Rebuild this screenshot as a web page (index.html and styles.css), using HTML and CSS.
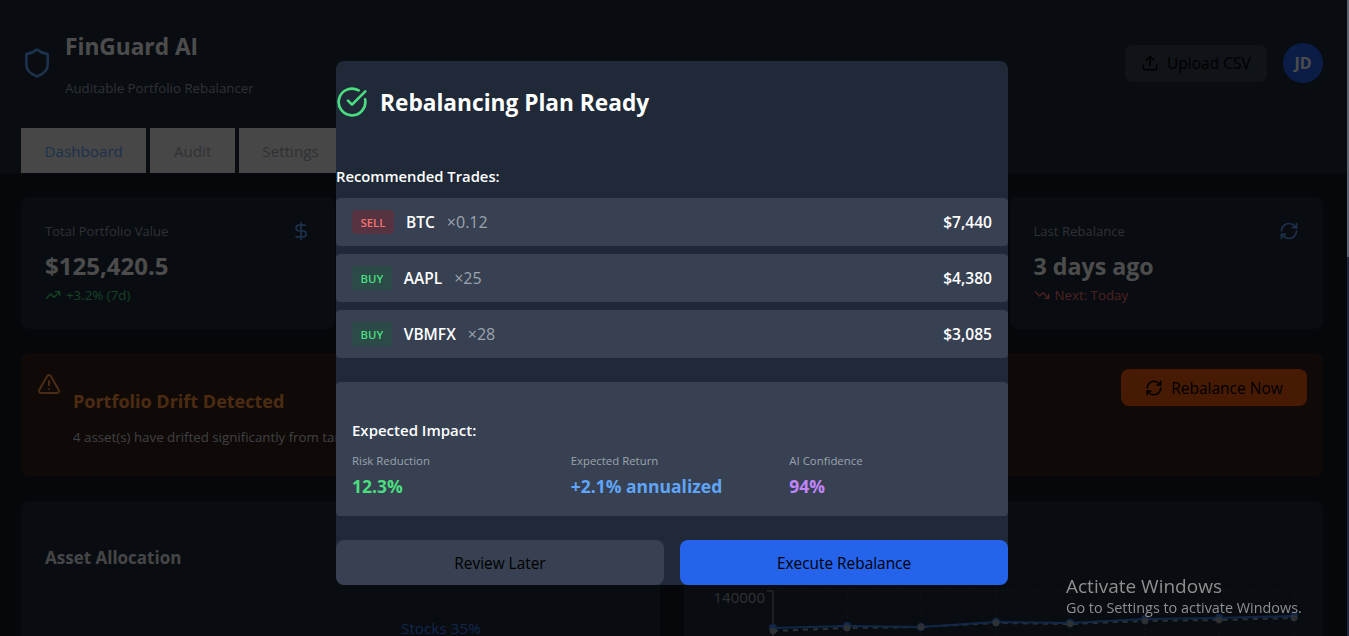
FILE: index.html
```html
<!DOCTYPE html>
<html lang="en">
<head>
  <meta charset="UTF-8">
  <title>FinGuard AI</title>
  <link rel="stylesheet" href="styles.css">
</head>
<body>
  <div class="page">
    <header class="header">
      <div class="header-top">
        <div class="brand">
          <svg class="brand-icon" viewBox="0 0 24 24"><path d="M20 13c0 5-3.500 7.500-7.660 8.950a1 1 0 0 1-.67-.01C7.500 20.500 4 18 4 13V6a1 1 0 0 1 1-1c2 0 4.500-1.200 6.240-2.720a1.170 1.170 0 0 1 1.520 0C14.510 3.810 17 5 19 5a1 1 0 0 1 1 1z"/></svg>
          <div>
            <h1>FinGuard AI</h1>
            <p>Auditable Portfolio Rebalancer</p>
          </div>
        </div>
        <div class="header-actions">
          <button class="upload-btn">
            <svg viewBox="0 0 24 24"><path d="M21 15v4a2 2 0 0 1-2 2H5a2 2 0 0 1-2-2v-4"/><path d="M17 8l-5-5-5 5"/><path d="M12 3v12"/></svg>
            Upload CSV
          </button>
          <div class="avatar">JD</div>
        </div>
      </div>
      <nav class="tabs">
        <button class="tab active">Dashboard</button>
        <button class="tab">Audit</button>
        <button class="tab">Settings</button>
      </nav>
    </header>

    <main class="main">
      <section class="stats">
        <div class="stat">
          <div class="stat-head">
            <span>Total Portfolio Value</span>
            <svg viewBox="0 0 24 24"><path d="M12 2v20"/><path d="M17 5H9.500a3.500 3.500 0 0 0 0 7h5a3.500 3.500 0 0 1 0 7H6"/></svg>
          </div>
          <div class="stat-value">$125,420.5</div>
          <div class="stat-note up">
            <svg viewBox="0 0 24 24"><path d="M22 7l-8.500 8.500-5-5L2 17"/><path d="M16 7h6v6"/></svg>
            +3.2% (7d)
          </div>
        </div>
        <div class="stat"></div>
        <div class="stat"></div>
        <div class="stat">
          <div class="stat-head">
            <span>Last Rebalance</span>
            <svg viewBox="0 0 24 24"><path d="M3 12a9 9 0 0 1 9-9 9.750 9.750 0 0 1 6.740 2.740L21 8"/><path d="M21 3v5h-5"/><path d="M21 12a9 9 0 0 1-9 9 9.750 9.750 0 0 1-6.740-2.740L3 16"/><path d="M8 16H3v5"/></svg>
          </div>
          <div class="stat-value wordy">3 days ago</div>
          <div class="stat-note down">
            <svg viewBox="0 0 24 24"><path d="M22 17l-8.500-8.500-5 5L2 7"/><path d="M16 17h6v-6"/></svg>
            Next: Today
          </div>
        </div>
      </section>

      <section class="alert">
        <svg class="alert-icon" viewBox="0 0 24 24"><path d="M21.730 18l-8-14a2 2 0 0 0-3.480 0l-8 14A2 2 0 0 0 4 21h16a2 2 0 0 0 1.730-3"/><path d="M12 9v4"/><path d="M12 17h.01"/></svg>
        <div class="alert-body">
          <h3>Portfolio Drift Detected</h3>
          <p>4 asset(s) have drifted significantly from target allocation</p>
        </div>
        <button class="alert-btn">
          <svg viewBox="0 0 24 24"><path d="M3 12a9 9 0 0 1 9-9 9.750 9.750 0 0 1 6.740 2.740L21 8"/><path d="M21 3v5h-5"/><path d="M21 12a9 9 0 0 1-9 9 9.750 9.750 0 0 1-6.740-2.740L3 16"/><path d="M8 16H3v5"/></svg>
          Rebalance Now
        </button>
      </section>

      <section class="charts">
        <div class="chart-card">
          <h3>Asset Allocation</h3>
          <div class="pie-label">Stocks 35%</div>
        </div>
        <div class="chart-card">
          <svg class="line-chart" viewBox="0 0 639 52">
            <g class="grid">
              <path d="M89 7H611"/>
              <path d="M89 7V52M163 7V52M237 7V52M312 7V52M386 7V52M461 7V52M535 7V52M610 7V52"/>
            </g>
            <path class="axis" d="M83 7H89V52"/>
            <text class="tick" x="81" y="19">140000</text>
            <polyline class="line-target" points="89,47 163,44 237,43 312,39 386,40 461,37 535,36 610,34"/>
            <polyline class="line-value" points="89,44 163,42 237,43 312,38 386,39 461,35 535,34 610,32"/>
            <g class="dots-value">
              <circle cx="89" cy="44" r="3"/><circle cx="163" cy="42" r="3"/><circle cx="237" cy="43" r="3"/><circle cx="312" cy="38" r="3"/><circle cx="386" cy="39" r="3"/><circle cx="461" cy="35" r="3"/><circle cx="535" cy="34" r="3"/><circle cx="610" cy="32" r="3"/>
            </g>
            <g class="dots-target">
              <circle cx="89" cy="47" r="3"/><circle cx="163" cy="44" r="3"/><circle cx="237" cy="43" r="3"/><circle cx="312" cy="39" r="3"/><circle cx="386" cy="40" r="3"/><circle cx="461" cy="37" r="3"/><circle cx="535" cy="36" r="3"/><circle cx="610" cy="34" r="3"/>
            </g>
          </svg>
        </div>
      </section>
    </main>

    <div class="overlay">
      <div class="modal">
        <div class="modal-title">
          <svg viewBox="0 0 24 24"><path d="M21.800 10A10 10 0 1 1 17 3.340"/><path d="M9 11l3 3L22 4"/></svg>
          <h2>Rebalancing Plan Ready</h2>
        </div>

        <h4 class="trades-title">Recommended Trades:</h4>
        <div class="trades">
          <div class="trade">
            <span class="badge sell">SELL</span>
            <span class="symbol">BTC</span>
            <span class="qty">×0.12</span>
            <span class="amount">$7,440</span>
          </div>
          <div class="trade">
            <span class="badge buy">BUY</span>
            <span class="symbol">AAPL</span>
            <span class="qty">×25</span>
            <span class="amount">$4,380</span>
          </div>
          <div class="trade">
            <span class="badge buy">BUY</span>
            <span class="symbol">VBMFX</span>
            <span class="qty">×28</span>
            <span class="amount">$3,085</span>
          </div>
        </div>

        <div class="impact">
          <h4>Expected Impact:</h4>
          <div class="impact-grid">
            <div>
              <div class="impact-label">Risk Reduction</div>
              <div class="impact-value green">12.3%</div>
            </div>
            <div>
              <div class="impact-label">Expected Return</div>
              <div class="impact-value blue">+2.1% annualized</div>
            </div>
            <div>
              <div class="impact-label">AI Confidence</div>
              <div class="impact-value purple">94%</div>
            </div>
          </div>
        </div>

        <div class="modal-actions">
          <button class="btn-later">Review Later</button>
          <button class="btn-execute">Execute Rebalance</button>
        </div>
      </div>
    </div>
  </div>

  <div class="scrollbar"><div class="scrollbar-thumb"></div></div>

  <div class="watermark">
    <div class="watermark-title">Activate Windows</div>
    <div>Go to Settings to activate Windows.</div>
  </div>
</body>
</html>
```

FILE: styles.css
```css
* { box-sizing: border-box; }
html, body { margin: 0; height: 636px; overflow: hidden; }
body { font-family: "Open Sans", "Noto Sans", sans-serif; background: #0a0d12; color: #fff; display: flex; }
h1, h2, h3, h4, p { margin: 0; }
button { font-family: inherit; border: 0; }
svg { fill: none; stroke: currentColor; stroke-width: 2; stroke-linecap: round; stroke-linejoin: round; }

.page { position: relative; width: 1347px; height: 636px; flex: none; background: #111827; overflow: hidden; }
.header { height: 173px; background: #1f2937; padding: 0 24px 0 21px; }
.header-top { height: 128px; display: flex; justify-content: space-between; align-items: flex-start; }
.brand { display: flex; align-items: center; gap: 12px; margin-top: 29px; }
.brand-icon { width: 32px; height: 32px; color: #60a5fa; }
.brand h1 { font-size: 22.7px; line-height: 36px; font-weight: 700; }
.brand p { font-size: 13.3px; line-height: 18px; margin-top: 14px; color: #9ca3af; }
.header-actions { display: flex; align-items: center; gap: 16px; margin-top: 43px; }
.upload-btn { display: flex; align-items: center; gap: 8px; width: 142px; height: 37px; padding: 0 16px; border-radius: 8px; background: #374151; color: #000; font-size: 15.500px; white-space: nowrap; }
.upload-btn svg { width: 18px; height: 18px; flex: none; }
.avatar { width: 40px; height: 40px; border-radius: 50%; background: #2563eb; font-weight: 700; font-size: 16px; display: flex; align-items: center; justify-content: center; }
.tabs { display: flex; gap: 4px; }
.tab { height: 45px; padding: 0 23.500px; background: #efefef; color: #9ca3af; font-size: 15.200px; }
.tab.active { color: #60a5fa; }

.main { padding: 24px 24px 0 21px; }
.stats { display: grid; grid-template-columns: repeat(4, 1fr); gap: 16px; }
.stat { height: 132px; padding: 24px; background: #1f2937; border-radius: 8px; }
.stat-head { display: flex; justify-content: space-between; align-items: center; height: 20px; font-size: 13.1px; color: #9ca3af; }
.stat-head svg { width: 20px; height: 20px; color: #60a5fa; }
.stat-value { font-size: 24px; line-height: 32px; font-weight: 700; margin-top: 9px; }
.stat-value.wordy { font-size: 23.2px; }
.stat-note { display: flex; align-items: center; gap: 5px; font-size: 13.3px; line-height: 18px; margin-top: 4px; }
.stat-note svg { width: 16px; height: 16px; }
.up { color: #4ade80; }
.down { color: #f87171; }

.alert { height: 123px; margin-top: 24px; padding: 16px; display: flex; background: #32211c; border-radius: 8px; }
.alert-icon { width: 24px; height: 24px; color: #fb923c; margin-top: 3px; flex: none; }
.alert-body { margin: 18px 0 0 12px; flex: 1; }
.alert-body h3 { font-size: 18px; line-height: 28px; font-weight: 700; color: #fb923c; }
.alert-body p { font-size: 13.3px; line-height: 18px; margin-top: 13px; color: #d1d5db; }
.alert-btn { display: flex; align-items: center; justify-content: center; gap: 8px; width: 186px; height: 37px; border-radius: 8px; background: #ea580c; color: #000; font-size: 15.500px; font-weight: 500; white-space: nowrap; }
.alert-btn svg { width: 18px; height: 18px; flex: none; }

.charts { display: grid; grid-template-columns: 1fr 1fr; gap: 24px; margin-top: 25px; }
.chart-card { height: 135px; background: #1f2937; border-radius: 8px 8px 0 0; overflow: hidden; }
.chart-card h3 { font-size: 17px; line-height: 28px; font-weight: 700; margin: 43px 0 0 24px; color: #e5e7eb; }
.pie-label { margin: 46px 0 0 380px; font-size: 15.300px; line-height: 20px; color: #3b82f6; }
.line-chart { display: block; width: 639px; height: 52px; margin-top: 83px; stroke-linecap: butt; }
.grid { stroke: #374151; stroke-width: 1; stroke-dasharray: 3 3; }
.axis { stroke: #9ca3af; stroke-width: 1; }
.tick { fill: #9ca3af; stroke: none; font-size: 15px; text-anchor: end; }
.line-value { stroke: #3b82f6; stroke-width: 2; }
.line-target { stroke: #9ca3af; stroke-width: 2; stroke-dasharray: 5 5; }
.dots-value circle { fill: #3b82f6; stroke: #3b82f6; stroke-width: 2; }
.dots-target circle { fill: #9ca3af; stroke: #9ca3af; stroke-width: 1; }

.overlay { position: absolute; inset: 0; background: rgba(0, 0, 0, .7); display: flex; justify-content: center; align-items: flex-start; padding: 61px 3px 0 0; }
.modal { width: 672px; height: 524px; background: #1f2937; border-radius: 8px; }
.modal-title { height: 82px; display: flex; align-items: center; gap: 12px; }
.modal-title svg { width: 32px; height: 32px; color: #4ade80; }
.modal-title h2 { font-size: 22.700px; font-weight: 700; }
.trades-title { font-size: 14.800px; line-height: 22px; font-weight: 600; margin-top: 22px; }
.trades { display: flex; flex-direction: column; gap: 8px; margin-top: 11px; }
.trade { height: 48px; display: flex; align-items: center; padding: 0 16px; background: #374151; border-radius: 4px; }
.badge { padding: 0 8.500px; height: 24px; line-height: 25px; border-radius: 4px; font-size: 11.400px; font-weight: 600; }
.badge.sell { background: #553340; color: #f87171; }
.badge.buy { background: #2c4a48; color: #4ade80; }
.symbol { font-size: 15.500px; font-weight: 600; margin-left: 12px; }
.qty { font-size: 16px; color: #9ca3af; margin-left: 12px; }
.amount { margin-left: auto; font-size: 15.600px; font-weight: 600; }

.impact { height: 134px; margin-top: 24px; padding: 37px 16px 0; background: #374151; border-radius: 4px; }
.impact h4 { font-size: 15px; line-height: 22px; font-weight: 600; }
.impact-grid { display: grid; grid-template-columns: repeat(3, 1fr); gap: 16px; margin-top: 12px; }
.impact-label { font-size: 11.400px; line-height: 16px; color: #9ca3af; }
.impact-value { font-size: 17.500px; line-height: 24px; font-weight: 700; margin-top: 5px; }
.green { color: #4ade80; }
.blue { color: #60a5fa; }
.purple { color: #c084fc; }

.modal-actions { display: flex; gap: 16px; margin-top: 24px; }
.modal-actions button { flex: 1; height: 45px; padding-top: 2px; border-radius: 8px; color: #000; font-size: 15.400px; font-weight: 500; }
.btn-later { background: #374151; }
.btn-execute { background: #2563eb; }

.scrollbar { width: 2px; height: 636px; background: #1f2937; }
.scrollbar-thumb { height: 257px; background: #5b6270; }

.watermark { position: fixed; left: 1066px; top: 574px; font-size: 14.400px; line-height: 20px; color: #8f8f8f; }
.watermark-title { font-size: 19px; line-height: 24px; }
```
